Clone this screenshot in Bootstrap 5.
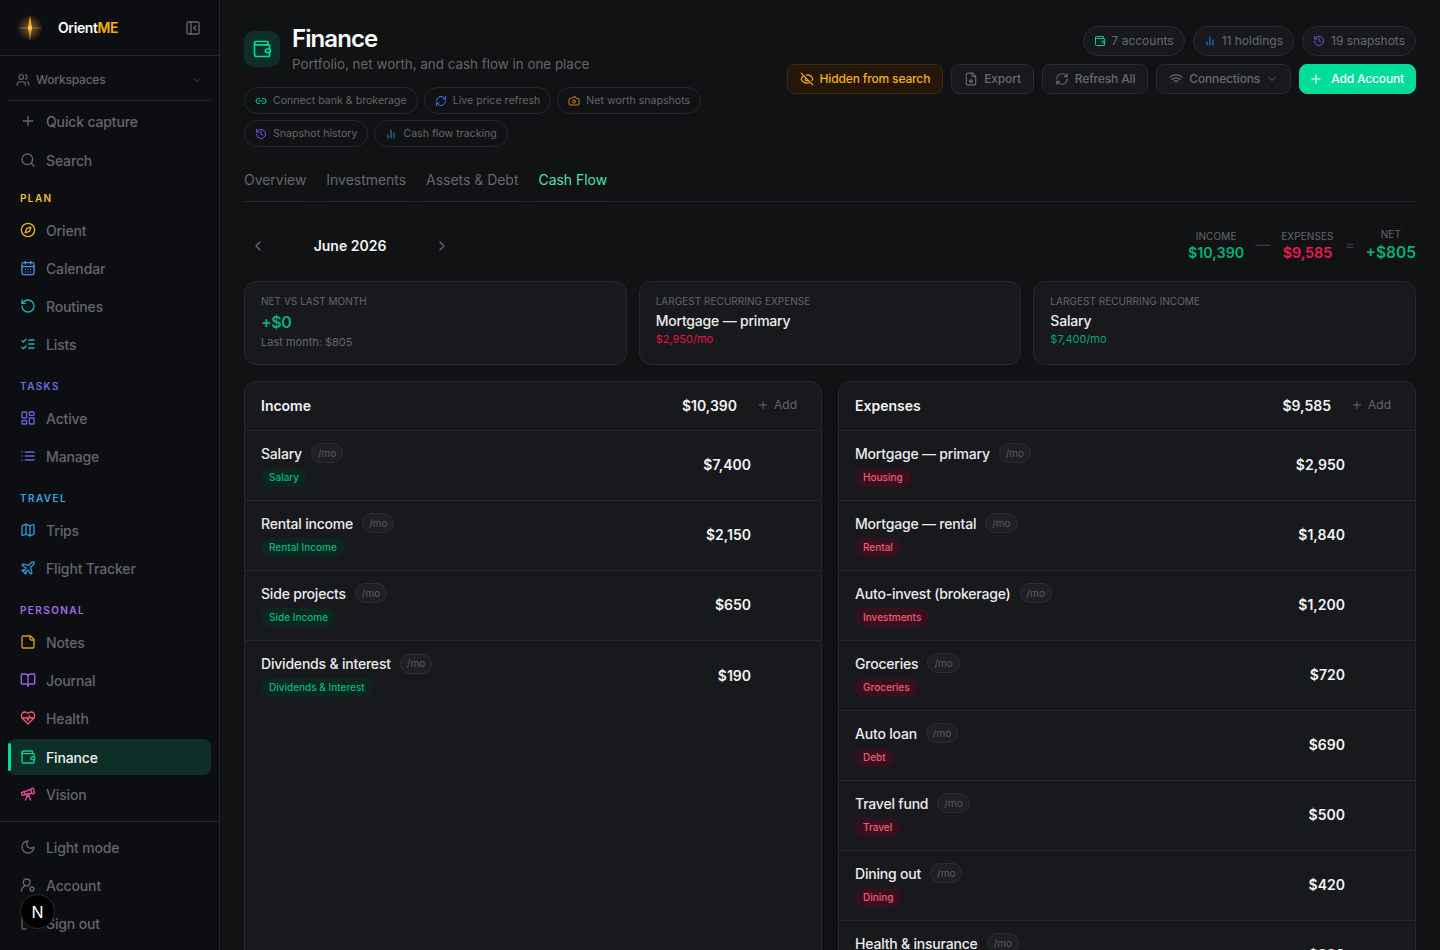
<!DOCTYPE html>
<html lang="en">
<head>
  <meta charset="UTF-8" />
  <meta name="viewport" content="width=device-width, initial-scale=1.0"/>
  <title>Finance | OrientME</title>
  <link href="https://cdn.jsdelivr.net/npm/bootstrap@5.3.0/dist/css/bootstrap.min.css" rel="stylesheet">
  <style>
    html, body { height: 100%; overflow: hidden; }
    body { font-family: Inter, "Liberation Sans", sans-serif; background: #111214; color: #f2f3f5; font-size: 14px; }
    .ico { fill: none; stroke: currentColor; stroke-width: 2; stroke-linecap: round; stroke-linejoin: round; flex: none; }
    .shell { height: 950px; }

    /* sidebar */
    .side { width: 220px; flex: none; background: #0d0e11; border-right: 1px solid #26272b; height: 950px; overflow: hidden; }
    .brand { height: 56px; padding: 0 18px 0 12px; border-bottom: 1px solid #26272b; }
    .brand-name { font-size: 14px; font-weight: 600; color: #fff; letter-spacing: -.4px; margin-left: 10px; }
    .brand-name span { color: #f5b014; }
    .collapse-ico { color: #63666d; margin-left: auto; }
    .ws { height: 45px; margin: 0 0 0 8px; width: 203px; padding: 4px 8px 0; border-bottom: 1px solid #26272b; color: #63666d; font-size: 12px; font-weight: 500; gap: 6px; letter-spacing: -.2px; }
    .ws .chev { margin-left: auto; color: #3f4147; }
    .side-link { display: flex; align-items: center; gap: 10px; height: 36px; margin: 2px 8px 0; padding-left: 12px; color: #63666d; font-size: 14px; font-weight: 500; letter-spacing: -.15px; text-decoration: none; border-radius: 8px; position: relative; }
    .side-link.on { background: #0e2f27; color: #eef0f2; top: 1px; }
    .side-link.on::before { content: ""; position: absolute; left: 0; top: 4px; bottom: 4px; width: 3px; background: #00dc9a; border-radius: 2px; }
    .side-head { font-size: 10px; font-weight: 600; letter-spacing: 1.4px; padding-left: 20px; height: 14px; line-height: 14px; margin-bottom: 7px; }
    .first-links { margin-top: -1px; }
    .first-links .side-link { margin-top: 3px; }
    .grp { margin-top: 17px; }
    .first-links + .grp { margin-top: 13px; }
    .side-foot { border-top: 1px solid #26272b; margin-top: 9px; padding-top: 5px; }
    .gold { color: #e9b31c; } .blue { color: #4f8fe6; } .teal { color: #14b8b8; } .indigo { color: #6366d6; }
    .sky { color: #2c98d8; } .amber { color: #d69a1e; } .violet { color: #9a63e8; } .rose { color: #ee5a6f; }
    .mint { color: #00d291; } .pink { color: #ec4899; } .plan-h { color: #f1c232; } .task-h { color: #6a6ee0; } .trav-h { color: #2fa8e6; } .pers-h { color: #a46ce8; }
    .royal { color: #2f7bf0; } .cyan { color: #0e9ec0; } .orange { color: #c9820f; } .purple { color: #7c4fe0; }

    /* header */
    .page { flex: 1; min-width: 0; padding: 24px 24px 0; height: 950px; overflow: hidden; }
    .head-ico { width: 36px; height: 36px; border-radius: 10px; background: #0c2f27; color: #00dc9a; margin-top: 7px; }
    .page-title { font-size: 24px; font-weight: 600; letter-spacing: -.9px; line-height: 30px; margin: 0; color: #fff; }
    .page-sub { font-size: 13.4px; color: #63666d; line-height: 20px; margin: 0; }
    .chip-wrap { margin-top: 13px; gap: 6px; width: 470px; }
    .chip { height: 27px; border: 1px solid #27282c; border-radius: 14px; padding: 0 10px; gap: 6px; font-size: 10.6px; color: #63666d; font-weight: 400; white-space: nowrap; }
    .pill-stat { height: 30px; border: 1px solid #2a2b2f; background: #18191c; border-radius: 15px; padding: 0 10px; gap: 6px; font-size: 12px; color: #66696f; }
    .tool { height: 30px; border: 1px solid #2a2b2f; background: #18191c; border-radius: 8px; padding: 0 12px; gap: 6px; font-size: 12px; font-weight: 500; letter-spacing: -.15px; color: #66696f; white-space: nowrap; }
    .tool.warn { background: #24170a; border-color: #3a2a10; color: #f5b014; }
    .tool.go { background: #00dc9a; border-color: #00dc9a; color: #fff; padding: 0 11px 0 9px; gap: 8px; }
    .tools-col { padding-top: 2px; }

    /* tabs */
    .tabrow { margin-top: 19px; border-bottom: 1px solid #202125; gap: 20px; height: 36px; }
    .tabbtn { color: #63666d; font-size: 14px; letter-spacing: -.03px; height: 36px; line-height: 28px; border-bottom: 1px solid #2a2b2f; margin-bottom: -1px; }
    .tabbtn.on { color: #4fe0b0; }

    /* month bar */
    .monthbar { height: 79px; padding-top: 8px; }
    .arrow { color: #63666d; width: 28px; }
    .month-name { width: 156px; text-align: center; font-size: 14px; font-weight: 600; color: #f2f3f5; }
    .sum-lab { font-size: 10px; color: #63666d; letter-spacing: .1px; line-height: 14px; }
    .sum-val { font-size: 14.3px; font-weight: 600; line-height: 20px; }
    .net-val { font-size: 15.5px; line-height: 24px; }
    .sum-op { color: #3a3b40; font-size: 15px; padding: 0 11px; }
    .pos { color: #00b37a; } .neg { color: #f2184f; }

    /* cards */
    .tile-grid { display: grid; grid-template-columns: repeat(3, 1fr); gap: 12px; }
    .tile { background: #18191c; border: 1px solid #27282c; border-radius: 12px; height: 84px; padding: 13px 16px; }
    .tile-lab { font-size: 10px; color: #63666d; line-height: 13px; letter-spacing: .03px; }
    .tile-big { font-size: 16px; font-weight: 600; line-height: 24px; margin-top: 2px; letter-spacing: -.4px; }
    .tile-name { font-size: 14px; font-weight: 500; letter-spacing: -.2px; line-height: 20px; margin-top: 3px; color: #ececee; }
    .tile-note { font-size: 11px; line-height: 16px; color: #63666d; }
    .tile-note.neg { color: #e0144c; }
    .tile-note.pos { color: #00a873; }
    .flow { background: #18191c; border: 1px solid #27282c; border-radius: 12px; height: 800px; overflow: hidden; }
    .flow-head { height: 49px; padding: 0 24px 2px 16px; border-bottom: 1px solid #27282c; font-weight: 600; }
    .flow-total { margin-left: auto; font-weight: 600; }
    .flow-add { margin-left: 20px; color: #63666d; font-size: 12px; font-weight: 400; gap: 5px; }
    .flow-row { height: 70px; padding: 0 70px 2px 16px; border-bottom: 1px solid #27282c; }
    .flow-name { font-size: 14px; font-weight: 500; letter-spacing: -.2px; color: #ececee; gap: 9px; }
    .mo { height: 20px; border: 1px solid #2c2d31; background: #1f2023; border-radius: 10px; padding: 0 6px; font-size: 10px; letter-spacing: 0; color: #5a5d64; font-weight: 400; }
    .tag { display: inline-block; height: 19px; line-height: 19px; border-radius: 10px; padding: 0 8px; font-size: 10px; font-weight: 500; margin-top: 4px; }
    .tag.in { background: #0d2620; color: #00b97d; }
    .tag.out { background: #36111d; color: #f35a7c; }
    .flow-amt { margin-left: auto; font-weight: 600; font-size: 14px; }

    /* dev badge */
    .dev-badge { position: absolute; left: 20px; top: 894px; width: 35px; height: 35px; border-radius: 50%; background: #000; border: 1px solid #2c2c2c; color: #fff; font-size: 16px; font-weight: 400; }
  </style>
</head>
<body>

<!-- icons -->
<svg width="0" height="0" class="position-absolute">
  <symbol id="i-plus" viewBox="0 0 24 24"><path d="M5 12h14M12 5v14"/></symbol>
  <symbol id="i-search" viewBox="0 0 24 24"><circle cx="11" cy="11" r="8"/><path d="m21 21-4.3-4.3"/></symbol>
  <symbol id="i-compass" viewBox="0 0 24 24"><circle cx="12" cy="12" r="10"/><path d="m16.24 7.76-2.12 6.36-6.36 2.12 2.12-6.36 6.36-2.12z"/></symbol>
  <symbol id="i-cal" viewBox="0 0 24 24"><rect x="3" y="4" width="18" height="18" rx="2"/><path d="M16 2v4M8 2v4M3 10h18M8 14h.01M12 14h.01M16 14h.01M8 18h.01M12 18h.01M16 18h.01"/></symbol>
  <symbol id="i-rotate" viewBox="0 0 24 24"><path d="M3 12a9 9 0 1 0 9-9 9.75 9.75 0 0 0-6.74 2.74L3 8"/><path d="M3 3v5h5"/></symbol>
  <symbol id="i-checks" viewBox="0 0 24 24"><path d="m3 17 2 2 4-4M3 7l2 2 4-4M13 6h8M13 12h8M13 18h8"/></symbol>
  <symbol id="i-dash" viewBox="0 0 24 24"><rect x="3" y="3" width="7" height="9" rx="1"/><rect x="14" y="3" width="7" height="5" rx="1"/><rect x="14" y="12" width="7" height="9" rx="1"/><rect x="3" y="16" width="7" height="5" rx="1"/></symbol>
  <symbol id="i-list" viewBox="0 0 24 24"><path d="M3 12h.01M3 18h.01M3 6h.01M8 12h13M8 18h13M8 6h13"/></symbol>
  <symbol id="i-map" viewBox="0 0 24 24"><path d="M14.106 5.553a2 2 0 0 0 1.788 0l3.659-1.83A1 1 0 0 1 21 4.619v12.764a1 1 0 0 1-.553.894l-4.553 2.277a2 2 0 0 1-1.788 0l-4.212-2.106a2 2 0 0 0-1.788 0l-3.659 1.83A1 1 0 0 1 3 19.381V6.618a1 1 0 0 1 .553-.894l4.553-2.277a2 2 0 0 1 1.788 0z"/><path d="M15 5.764v15M9 3.236v15"/></symbol>
  <symbol id="i-plane" viewBox="0 0 24 24"><path d="M17.8 19.2 16 11l3.5-3.5C21 6 21.5 4 21 3c-1-.5-3 0-4.5 1.5L13 8 4.8 6.2c-.5-.1-.9.1-1.1.5l-.3.5c-.2.5-.1 1 .3 1.3L9 12l-2 3H4l-1 1 3 2 2 3 1-1v-3l3-2 3.5 5.3c.3.4.8.5 1.3.3l.5-.2c.4-.3.6-.7.5-1.2z"/></symbol>
  <symbol id="i-note" viewBox="0 0 24 24"><path d="M16 3H5a2 2 0 0 0-2 2v14a2 2 0 0 0 2 2h14a2 2 0 0 0 2-2V8Z"/><path d="M15 3v4a2 2 0 0 0 2 2h4"/></symbol>
  <symbol id="i-book" viewBox="0 0 24 24"><path d="M12 7v14"/><path d="M3 18a1 1 0 0 1-1-1V4a1 1 0 0 1 1-1h5a4 4 0 0 1 4 4 4 4 0 0 1 4-4h5a1 1 0 0 1 1 1v13a1 1 0 0 1-1 1h-6a3 3 0 0 0-3 3 3 3 0 0 0-3-3z"/></symbol>
  <symbol id="i-heart" viewBox="0 0 24 24"><path d="M19 14c1.49-1.46 3-3.21 3-5.5A5.5 5.5 0 0 0 16.5 3c-1.76 0-3 .5-4.5 2-1.5-1.5-2.74-2-4.5-2A5.5 5.5 0 0 0 2 8.5c0 2.3 1.5 4.05 3 5.5l7 7Z"/><path d="M3.22 12H9.5l.5-1 2 4.5 2-7 1.5 3.5h5.27"/></symbol>
  <symbol id="i-wallet" viewBox="0 0 24 24"><path d="M19 7V4a1 1 0 0 0-1-1H5a2 2 0 0 0 0 4h15a1 1 0 0 1 1 1v4h-3a2 2 0 0 0 0 4h3a1 1 0 0 0 1-1v-2a1 1 0 0 0-1-1"/><path d="M3 5v14a2 2 0 0 0 2 2h15a1 1 0 0 0 1-1v-4"/></symbol>
  <symbol id="i-scope" viewBox="0 0 24 24"><path d="m10.065 12.493-6.18 1.318a.934.934 0 0 1-1.108-.702l-.537-2.15a1.07 1.07 0 0 1 .691-1.265l13.504-4.44"/><path d="m13.56 11.747 4.332-.924M16 21l-3.105-6.21"/><path d="M16.485 5.94a2 2 0 0 1 1.455-2.425l1.09-.272a1 1 0 0 1 1.212.727l1.515 6.06a1 1 0 0 1-.727 1.213l-1.09.272a2 2 0 0 1-2.425-1.455z"/><path d="m6.158 8.633 1.114 4.456M8 21l3.105-6.21"/><circle cx="12" cy="13" r="2"/></symbol>
  <symbol id="i-moon" viewBox="0 0 24 24"><path d="M12 3a6 6 0 0 0 9 9 9 9 0 1 1-9-9Z"/></symbol>
  <symbol id="i-user" viewBox="0 0 24 24"><path d="M2 21a8 8 0 0 1 10.4-7.6"/><circle cx="10" cy="8" r="5"/><circle cx="18" cy="18" r="3"/></symbol>
  <symbol id="i-logout" viewBox="0 0 24 24"><path d="M9 21H5a2 2 0 0 1-2-2V5a2 2 0 0 1 2-2h4M16 17l5-5-5-5M21 12H9"/></symbol>
  <symbol id="i-users" viewBox="0 0 24 24"><path d="M16 21v-2a4 4 0 0 0-4-4H6a4 4 0 0 0-4 4v2"/><circle cx="9" cy="7" r="4"/><path d="M22 21v-2a4 4 0 0 0-3-3.87M16 3.13a4 4 0 0 1 0 7.75"/></symbol>
  <symbol id="i-down" viewBox="0 0 24 24"><path d="m6 9 6 6 6-6"/></symbol>
  <symbol id="i-left" viewBox="0 0 24 24"><path d="m15 18-6-6 6-6"/></symbol>
  <symbol id="i-right" viewBox="0 0 24 24"><path d="m9 18 6-6-6-6"/></symbol>
  <symbol id="i-panel" viewBox="0 0 24 24"><rect x="3" y="3" width="18" height="18" rx="2"/><path d="M9 3v18M16 15l-3-3 3-3"/></symbol>
  <symbol id="i-link" viewBox="0 0 24 24"><path d="M9 17H7A5 5 0 0 1 7 7h2M15 7h2a5 5 0 1 1 0 10h-2M8 12h8"/></symbol>
  <symbol id="i-refresh" viewBox="0 0 24 24"><path d="M3 12a9 9 0 0 1 9-9 9.75 9.75 0 0 1 6.74 2.74L21 8M21 3v5h-5M21 12a9 9 0 0 1-9 9 9.75 9.75 0 0 1-6.74-2.74L3 16M8 16H3v5"/></symbol>
  <symbol id="i-camera" viewBox="0 0 24 24"><path d="M14.5 4h-5L7 7H4a2 2 0 0 0-2 2v9a2 2 0 0 0 2 2h16a2 2 0 0 0 2-2V9a2 2 0 0 0-2-2h-3l-2.5-3z"/><circle cx="12" cy="13" r="3"/></symbol>
  <symbol id="i-history" viewBox="0 0 24 24"><path d="M3 12a9 9 0 1 0 9-9 9.75 9.75 0 0 0-6.74 2.74L3 8"/><path d="M3 3v5h5M12 7v5l4 2"/></symbol>
  <symbol id="i-bars" viewBox="0 0 24 24"><path d="M18 20V10M12 20V4M6 20v-6"/></symbol>
  <symbol id="i-eyeoff" viewBox="0 0 24 24"><path d="M9.88 9.88a3 3 0 1 0 4.24 4.24M10.73 5.08A10.43 10.43 0 0 1 12 5c7 0 10 7 10 7a13.16 13.16 0 0 1-1.67 2.68M6.61 6.61A13.526 13.526 0 0 0 2 12s3 7 10 7a9.74 9.74 0 0 0 5.39-1.61M2 2l20 20"/></symbol>
  <symbol id="i-file" viewBox="0 0 24 24"><path d="M15 2H6a2 2 0 0 0-2 2v16a2 2 0 0 0 2 2h12a2 2 0 0 0 2-2V7Z"/><path d="M14 2v4a2 2 0 0 0 2 2h4M12 18v-6M9 15l3 3 3-3"/></symbol>
  <symbol id="i-wifi" viewBox="0 0 24 24"><path d="M12 20h.01M2 8.82a15 15 0 0 1 20 0M5 12.859a10 10 0 0 1 14 0M8.5 16.429a5 5 0 0 1 7 0"/></symbol>
</svg>

<div class="shell d-flex">

  <!-- Sidebar -->
  <aside class="side">
    <div class="brand d-flex align-items-center">
      <svg width="36" height="36" viewBox="0 0 36 36">
        <defs>
          <radialGradient id="glow"><stop offset="0" stop-color="#f59e0b" stop-opacity=".55"/><stop offset="1" stop-color="#f59e0b" stop-opacity="0"/></radialGradient>
          <linearGradient id="spike" x1="0" y1="0" x2="0" y2="1"><stop offset="0" stop-color="#f59e0b"/><stop offset=".55" stop-color="#f7a823"/><stop offset="1" stop-color="#4b5563"/></linearGradient>
        </defs>
        <circle cx="18" cy="18" r="13" fill="url(#glow)"/>
        <path d="M18 5l2 13-2 13-2-13z" fill="url(#spike)"/>
        <path d="M5 18l13-1.6L31 18l-13 1.6z" fill="#5b6472"/>
        <circle cx="18" cy="18" r="2.2" fill="#ffc266"/>
      </svg>
      <span class="brand-name">Orient<span>ME</span></span>
      <svg class="ico collapse-ico" width="16" height="16"><use href="#i-panel"/></svg>
    </div>
    <div class="ws d-flex align-items-center">
      <svg class="ico" width="14" height="14"><use href="#i-users"/></svg>Workspaces
      <svg class="ico chev" width="12" height="12"><use href="#i-down"/></svg>
    </div>
    <div class="first-links">
      <a class="side-link" href="#"><svg class="ico" width="16" height="16"><use href="#i-plus"/></svg>Quick capture</a>
      <a class="side-link" href="#"><svg class="ico" width="16" height="16"><use href="#i-search"/></svg>Search</a>
    </div>
    <div class="grp">
      <div class="side-head plan-h">PLAN</div>
      <a class="side-link" href="#"><svg class="ico gold" width="16" height="16"><use href="#i-compass"/></svg>Orient</a>
      <a class="side-link" href="#"><svg class="ico blue" width="16" height="16"><use href="#i-cal"/></svg>Calendar</a>
      <a class="side-link" href="#"><svg class="ico teal" width="16" height="16"><use href="#i-rotate"/></svg>Routines</a>
      <a class="side-link" href="#"><svg class="ico teal" width="16" height="16"><use href="#i-checks"/></svg>Lists</a>
    </div>
    <div class="grp">
      <div class="side-head task-h">TASKS</div>
      <a class="side-link" href="#"><svg class="ico indigo" width="16" height="16"><use href="#i-dash"/></svg>Active</a>
      <a class="side-link" href="#"><svg class="ico indigo" width="16" height="16"><use href="#i-list"/></svg>Manage</a>
    </div>
    <div class="grp">
      <div class="side-head trav-h">TRAVEL</div>
      <a class="side-link" href="#"><svg class="ico sky" width="16" height="16"><use href="#i-map"/></svg>Trips</a>
      <a class="side-link" href="#"><svg class="ico sky" width="16" height="16"><use href="#i-plane"/></svg>Flight Tracker</a>
    </div>
    <div class="grp">
      <div class="side-head pers-h">PERSONAL</div>
      <a class="side-link" href="#"><svg class="ico amber" width="16" height="16"><use href="#i-note"/></svg>Notes</a>
      <a class="side-link" href="#"><svg class="ico violet" width="16" height="16"><use href="#i-book"/></svg>Journal</a>
      <a class="side-link" href="#"><svg class="ico rose" width="16" height="16"><use href="#i-heart"/></svg>Health</a>
      <a class="side-link on" href="#"><svg class="ico mint" width="16" height="16"><use href="#i-wallet"/></svg>Finance</a>
      <a class="side-link" href="#"><svg class="ico pink" width="16" height="16"><use href="#i-scope"/></svg>Vision</a>
    </div>
    <div class="side-foot">
      <a class="side-link" href="#"><svg class="ico" width="16" height="16"><use href="#i-moon"/></svg>Light mode</a>
      <a class="side-link" href="#"><svg class="ico" width="16" height="16"><use href="#i-user"/></svg>Account</a>
      <a class="side-link" href="#"><svg class="ico" width="16" height="16"><use href="#i-logout"/></svg>Sign out</a>
    </div>
  </aside>

  <!-- Main -->
  <main class="page">
    <div class="d-flex justify-content-between align-items-start">
      <div>
        <div class="d-flex gap-2">
          <div class="head-ico d-flex align-items-center justify-content-center me-1"><svg class="ico" width="20" height="20"><use href="#i-wallet"/></svg></div>
          <div>
            <h1 class="page-title">Finance</h1>
            <p class="page-sub">Portfolio, net worth, and cash flow in one place</p>
          </div>
        </div>
        <div class="chip-wrap d-flex flex-wrap">
          <span class="chip d-inline-flex align-items-center"><svg class="ico mint" width="12" height="12"><use href="#i-link"/></svg>Connect bank &amp; brokerage</span>
          <span class="chip d-inline-flex align-items-center"><svg class="ico royal" width="12" height="12"><use href="#i-refresh"/></svg>Live price refresh</span>
          <span class="chip d-inline-flex align-items-center"><svg class="ico orange" width="12" height="12"><use href="#i-camera"/></svg>Net worth snapshots</span>
          <span class="chip d-inline-flex align-items-center"><svg class="ico purple" width="12" height="12"><use href="#i-history"/></svg>Snapshot history</span>
          <span class="chip d-inline-flex align-items-center"><svg class="ico cyan" width="12" height="12"><use href="#i-bars"/></svg>Cash flow tracking</span>
        </div>
      </div>
      <div class="tools-col d-flex flex-column align-items-end gap-2">
        <div class="d-flex gap-2">
          <span class="pill-stat d-inline-flex align-items-center"><svg class="ico mint" width="12" height="12"><use href="#i-wallet"/></svg>7 accounts</span>
          <span class="pill-stat d-inline-flex align-items-center"><svg class="ico royal" width="12" height="12"><use href="#i-bars"/></svg>11 holdings</span>
          <span class="pill-stat d-inline-flex align-items-center"><svg class="ico purple" width="12" height="12"><use href="#i-history"/></svg>19 snapshots</span>
        </div>
        <div class="d-flex gap-2">
          <span class="tool warn d-inline-flex align-items-center"><svg class="ico" width="14" height="14"><use href="#i-eyeoff"/></svg>Hidden from search</span>
          <span class="tool d-inline-flex align-items-center"><svg class="ico" width="14" height="14"><use href="#i-file"/></svg>Export</span>
          <span class="tool d-inline-flex align-items-center"><svg class="ico" width="14" height="14"><use href="#i-refresh"/></svg>Refresh All</span>
          <span class="tool d-inline-flex align-items-center"><svg class="ico" width="14" height="14"><use href="#i-wifi"/></svg>Connections<svg class="ico" width="12" height="12"><use href="#i-down"/></svg></span>
          <span class="tool go d-inline-flex align-items-center"><svg class="ico" width="14" height="14"><use href="#i-plus"/></svg>Add Account</span>
        </div>
      </div>
    </div>

    <div class="tabrow d-flex">
      <span class="tabbtn">Overview</span>
      <span class="tabbtn">Investments</span>
      <span class="tabbtn">Assets &amp; Debt</span>
      <span class="tabbtn on">Cash Flow</span>
    </div>

    <div class="monthbar d-flex align-items-center">
      <svg class="ico arrow" width="16" height="16"><use href="#i-left"/></svg>
      <span class="month-name">June 2026</span>
      <svg class="ico arrow" width="16" height="16"><use href="#i-right"/></svg>
      <div class="ms-auto d-flex align-items-center text-center">
        <div><div class="sum-lab">INCOME</div><div class="sum-val pos">$10,390</div></div>
        <span class="sum-op">—</span>
        <div><div class="sum-lab">EXPENSES</div><div class="sum-val neg">$9,585</div></div>
        <span class="sum-op">=</span>
        <div><div class="sum-lab">NET</div><div class="sum-val net-val pos">+$805</div></div>
      </div>
    </div>

    <div class="tile-grid">
      <div class="tile">
        <div class="tile-lab">NET VS LAST MONTH</div>
        <div class="tile-big pos">+$0</div>
        <div class="tile-note">Last month: $805</div>
      </div>
      <div class="tile">
        <div class="tile-lab">LARGEST RECURRING EXPENSE</div>
        <div class="tile-name">Mortgage — primary</div>
        <div class="tile-note neg">$2,950/mo</div>
      </div>
      <div class="tile">
        <div class="tile-lab">LARGEST RECURRING INCOME</div>
        <div class="tile-name">Salary</div>
        <div class="tile-note pos">$7,400/mo</div>
      </div>
    </div>

    <div class="row g-3 mt-0">
      <div class="col-6">
        <div class="flow">
          <div class="flow-head d-flex align-items-center">Income<span class="flow-total">$10,390</span><span class="flow-add d-inline-flex align-items-center"><svg class="ico" width="12" height="12"><use href="#i-plus"/></svg>Add</span></div>
          <div class="flow-row d-flex align-items-center"><div><div class="flow-name d-flex align-items-center">Salary<span class="mo d-inline-flex align-items-center">/mo</span></div><span class="tag in">Salary</span></div><span class="flow-amt">$7,400</span></div>
          <div class="flow-row d-flex align-items-center"><div><div class="flow-name d-flex align-items-center">Rental income<span class="mo d-inline-flex align-items-center">/mo</span></div><span class="tag in">Rental Income</span></div><span class="flow-amt">$2,150</span></div>
          <div class="flow-row d-flex align-items-center"><div><div class="flow-name d-flex align-items-center">Side projects<span class="mo d-inline-flex align-items-center">/mo</span></div><span class="tag in">Side Income</span></div><span class="flow-amt">$650</span></div>
          <div class="flow-row d-flex align-items-center border-0"><div><div class="flow-name d-flex align-items-center">Dividends &amp; interest<span class="mo d-inline-flex align-items-center">/mo</span></div><span class="tag in">Dividends &amp; Interest</span></div><span class="flow-amt">$190</span></div>
        </div>
      </div>
      <div class="col-6">
        <div class="flow">
          <div class="flow-head d-flex align-items-center">Expenses<span class="flow-total">$9,585</span><span class="flow-add d-inline-flex align-items-center"><svg class="ico" width="12" height="12"><use href="#i-plus"/></svg>Add</span></div>
          <div class="flow-row d-flex align-items-center"><div><div class="flow-name d-flex align-items-center">Mortgage — primary<span class="mo d-inline-flex align-items-center">/mo</span></div><span class="tag out">Housing</span></div><span class="flow-amt">$2,950</span></div>
          <div class="flow-row d-flex align-items-center"><div><div class="flow-name d-flex align-items-center">Mortgage — rental<span class="mo d-inline-flex align-items-center">/mo</span></div><span class="tag out">Rental</span></div><span class="flow-amt">$1,840</span></div>
          <div class="flow-row d-flex align-items-center"><div><div class="flow-name d-flex align-items-center">Auto-invest (brokerage)<span class="mo d-inline-flex align-items-center">/mo</span></div><span class="tag out">Investments</span></div><span class="flow-amt">$1,200</span></div>
          <div class="flow-row d-flex align-items-center"><div><div class="flow-name d-flex align-items-center">Groceries<span class="mo d-inline-flex align-items-center">/mo</span></div><span class="tag out">Groceries</span></div><span class="flow-amt">$720</span></div>
          <div class="flow-row d-flex align-items-center"><div><div class="flow-name d-flex align-items-center">Auto loan<span class="mo d-inline-flex align-items-center">/mo</span></div><span class="tag out">Debt</span></div><span class="flow-amt">$690</span></div>
          <div class="flow-row d-flex align-items-center"><div><div class="flow-name d-flex align-items-center">Travel fund<span class="mo d-inline-flex align-items-center">/mo</span></div><span class="tag out">Travel</span></div><span class="flow-amt">$500</span></div>
          <div class="flow-row d-flex align-items-center"><div><div class="flow-name d-flex align-items-center">Dining out<span class="mo d-inline-flex align-items-center">/mo</span></div><span class="tag out">Dining</span></div><span class="flow-amt">$420</span></div>
          <div class="flow-row d-flex align-items-center"><div><div class="flow-name d-flex align-items-center">Health &amp; insurance<span class="mo d-inline-flex align-items-center">/mo</span></div><span class="tag out">Health</span></div><span class="flow-amt">$380</span></div>
        </div>
      </div>
    </div>
  </main>
</div>

<div class="dev-badge d-flex align-items-center justify-content-center">N</div>

<script src="https://cdn.jsdelivr.net/npm/bootstrap@5.3.0/dist/js/bootstrap.bundle.min.js"></script>
</body>
</html>
